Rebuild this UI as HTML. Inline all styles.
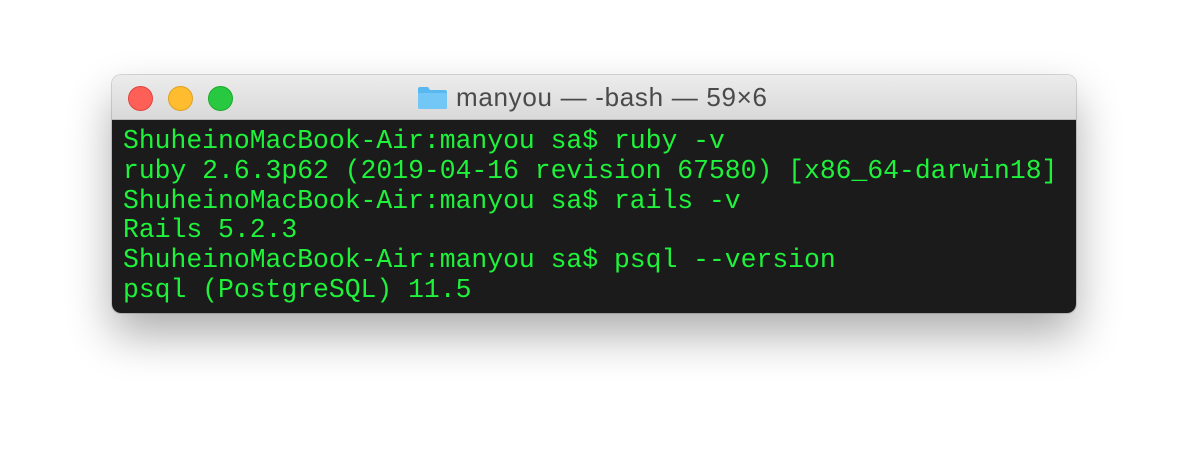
<!DOCTYPE html>
<html><head><style>
html,body{margin:0;padding:0;background:#fff;width:1188px;height:462px;overflow:hidden}
.win{position:absolute;left:112px;top:75px;width:964px;height:238px;border-radius:9px;overflow:hidden;
box-shadow:0 22px 45px rgba(0,0,0,0.32),0 0 0 1px rgba(0,0,0,0.15)}
.title{position:absolute;left:0;top:0;width:964px;height:44px;background:linear-gradient(#ececec,#d9d9d9);border-bottom:1px solid #b8b8b8}
.b{position:absolute;top:11px;width:23px;height:23px;border-radius:50%}
.t{position:absolute;left:344px;top:7px;font:26px "Liberation Sans",sans-serif;color:#4a4a4a;white-space:nowrap;letter-spacing:0.7px}
.term{position:absolute;left:0;top:45px;width:964px;height:193px;background:#1b1b1b}
pre{margin:0;position:absolute;left:11px;top:7px;font:26.4px/29.8px "Liberation Mono",monospace;color:#1ff23a}
</style></head><body>
<div class="win">
<div class="title">
<div class="b" style="left:16px;background:#fe5f57;border:0.5px solid #e0443e"></div>
<div class="b" style="left:56px;background:#febc2e;border:0.5px solid #dea123"></div>
<div class="b" style="left:96px;background:#28c840;border:0.5px solid #1aab29"></div>
<svg style="position:absolute;left:305px;top:11px" width="31" height="24" viewBox="0 0 31 24">
<path d="M1 3 Q1 1 3 1 H11 L13 4 H28 Q30 4 30 6 V21 Q30 23 28 23 H3 Q1 23 1 21 Z" fill="#5ab8f0"/>
<path d="M1 7 H30 V21 Q30 23 28 23 H3 Q1 23 1 21 Z" fill="#72c7f7"/>
</svg>
<div class="t">manyou — -bash — 59×6</div>
</div>
<div class="term"><pre>ShuheinoMacBook-Air:manyou sa$ ruby -v
ruby 2.6.3p62 (2019-04-16 revision 67580) [x86_64-darwin18]
ShuheinoMacBook-Air:manyou sa$ rails -v
Rails 5.2.3
ShuheinoMacBook-Air:manyou sa$ psql --version
psql (PostgreSQL) 11.5</pre></div>
</div>
</body></html>
